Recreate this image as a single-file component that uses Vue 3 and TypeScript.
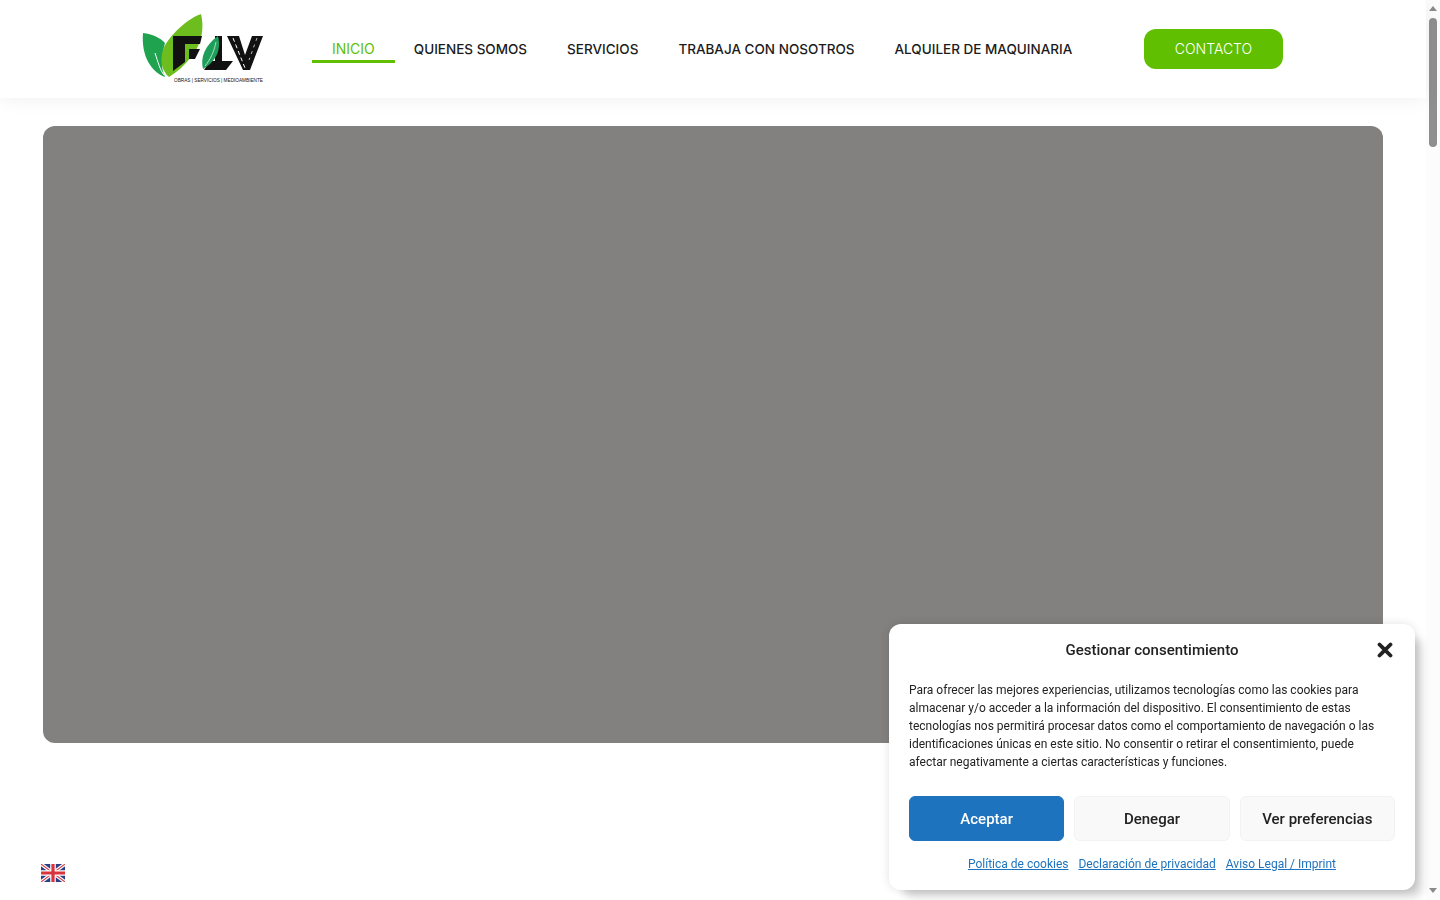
<script setup lang="ts">
const navItems: { label: string; active?: boolean }[] = [
  { label: 'INICIO', active: true },
  { label: 'QUIENES SOMOS' },
  { label: 'SERVICIOS' },
  { label: 'TRABAJA CON NOSOTROS' },
  { label: 'ALQUILER DE MAQUINARIA' },
]
const buttons = [
  { label: 'Aceptar', primary: true },
  { label: 'Denegar' },
  { label: 'Ver preferencias' },
]
const links = ['Política de cookies', 'Declaración de privacidad', 'Aviso Legal / Imprint']
</script>

<template>
  <div class="page">
    <div class="main">
      <header class="header">
        <svg class="logo" width="122" height="74" viewBox="0 0 122 74" aria-label="FLV">
          <path d="M1 21 C10 22 19 26 23 31 C20 42 18 55 23 65 C10 60 -1 45 1 21Z" fill="#1fa34f" />
          <path d="M13 41 C16 50 18 58 22 63" stroke="#fff" stroke-width="1" fill="none" />
          <path d="M59 2 C62 14 61 30 50 44 C42 54 35 60 27 65 C21 60 17 50 21 38 C24 28 42 8 59 2Z" fill="#6dbd1e" />
          <path d="M31 24 H60 L58 32 H43 V50 L31 59Z" fill="#111" />
          <path d="M47 37 H58 L53 47 H47Z" fill="#111" />
          <path d="M73 24 H80 V49 H91 L84 58 H62 L68 49 H73Z" fill="#111" />
          <path d="M76 24 C79 36 76 48 61 57 C58 46 63 33 76 24Z" fill="#1e9e5a" />
          <path d="M74 30 C72 40 68 48 63 54" stroke="#cfeeda" stroke-width="0.8" fill="none" />
          <path d="M85 24 H97 L103 43 L110 24 H121 L108 58 H101Z" fill="#111" />
          <path d="M91 26 L103 56" stroke="#fff" stroke-width="1" stroke-dasharray="4 3" fill="none" />
          <path d="M115 26 L107 48" stroke="#fff" stroke-width="0.7" stroke-dasharray="3 4" fill="none" />
          <text x="32" y="70" class="logo-sub" textLength="89" lengthAdjust="spacingAndGlyphs">OBRAS | SERVICIOS | MEDIOAMBIENTE</text>
        </svg>
        <nav class="nav">
          <a v-for="item in navItems" :key="item.label" class="nav-link" :class="{ active: item.active }">{{ item.label }}</a>
        </nav>
        <a class="contact">CONTACTO</a>
      </header>
      <div class="hero"></div>
    </div>
    <div class="scrollbar">
      <span class="arrow up"></span>
      <span class="thumb-track"><span class="thumb"></span></span>
      <span class="arrow down"></span>
    </div>

    <svg class="flag" width="24" height="18" viewBox="0 0 24 18" aria-label="English">
      <rect width="24" height="18" fill="#2b3f87" />
      <path d="M0 0 L24 18 M24 0 L0 18" stroke="#fff" stroke-width="3.4" />
      <path d="M0 0 L24 18 M24 0 L0 18" stroke="#d8434a" stroke-width="1.1" />
      <path d="M12 0 V18 M0 9 H24" stroke="#fff" stroke-width="5.6" />
      <path d="M12 0 V18 M0 9 H24" stroke="#d8343c" stroke-width="3.2" />
    </svg>

    <aside class="modal">
      <div class="modal-head">
        <h2 class="modal-title">Gestionar consentimiento</h2>
        <svg class="close" width="16" height="16" viewBox="0 0 16 16" aria-label="Cerrar">
          <path d="M2.5 2.5 L13.5 13.5 M13.5 2.5 L2.5 13.5" stroke="#222" stroke-width="3.8" stroke-linecap="round" />
        </svg>
      </div>
      <p class="modal-text">Para ofrecer las mejores experiencias, utilizamos tecnologías como las cookies para almacenar y/o acceder a la información del dispositivo. El consentimiento de estas tecnologías nos permitirá procesar datos como el comportamiento de navegación o las identificaciones únicas en este sitio. No consentir o retirar el consentimiento, puede afectar negativamente a ciertas características y funciones.</p>
      <div class="modal-buttons">
        <button v-for="b in buttons" :key="b.label" class="btn" :class="{ primary: b.primary }">{{ b.label }}</button>
      </div>
      <div class="modal-links">
        <a v-for="l in links" :key="l" class="modal-link">{{ l }}</a>
      </div>
    </aside>
  </div>
</template>

<style>
html, body { margin: 0; height: 100%; overflow: hidden; background: #fff; }
</style>

<style scoped>
.page { display: flex; width: 1440px; height: 900px; overflow: hidden; background: #fff; }
.main { width: 1426px; flex: none; }
.header {
  height: 98px;
  display: flex;
  align-items: center;
  padding-left: 142px;
  background: #fff;
  box-shadow: 0 2px 18px rgba(0, 0, 0, 0.06);
  position: relative;
}
.logo { flex: none; margin-right: 48px; overflow: visible; }
.logo-sub { font-family: "Liberation Sans Narrow", "Liberation Sans", sans-serif; font-size: 6px; fill: #111; }
.nav { display: flex; gap: 0; }
.nav-link {
  font-family: Inter, sans-serif;
  font-size: 13.5px;
  font-weight: 500;
  color: #1b1b1b;
  padding: 0 20px;
  height: 28px;
  line-height: 28px;
  box-sizing: border-box;
  white-space: nowrap;
}
.nav-link.active { color: #5fbf00; border-bottom: 3px solid #5fbf00; font-size: 14px; font-weight: 400; margin-right: -1px; }
.contact {
  margin-left: auto;
  margin-right: 143px;
  width: 139px;
  height: 40px;
  border-radius: 12px;
  background: #60bf00;
  color: #fff;
  font-family: Inter, sans-serif;
  font-size: 14px;
  font-weight: 300;
  line-height: 40px;
  text-align: center;
}
.hero {
  margin: 28px 0 0 43px;
  width: 1340px;
  height: 617px;
  border-radius: 12px;
  background: #83817f;
}
.scrollbar {
  width: 14px;
  flex: none;
  height: 900px;
  display: flex;
  flex-direction: column;
  align-items: center;
  background: #fcfcfc;
}
.arrow { width: 0; height: 0; border-left: 4.5px solid transparent; border-right: 4.5px solid transparent; flex: none; }
.arrow.up { border-bottom: 5px solid #8a8a8a; margin-top: 6px; }
.arrow.down { border-top: 5px solid #8a8a8a; margin-bottom: 7px; }
.thumb-track { flex: 1; width: 100%; display: flex; justify-content: center; padding-top: 7px; }
.thumb { width: 8px; height: 129px; border-radius: 4px; background: #8f8f8f; }
.flag { position: fixed; left: 41px; top: 864px; }
.modal {
  position: fixed;
  left: 889px;
  top: 624px;
  width: 526px;
  height: 266px;
  box-sizing: border-box;
  padding: 0 20px;
  background: #fff;
  border-radius: 12px;
  box-shadow: 10px 10px 10px -4px rgba(0, 0, 0, 0.2), 0 0 10px rgba(0, 0, 0, 0.12);
  font-family: Roboto, sans-serif;
  color: #222;
}
.modal-head { height: 52px; display: flex; align-items: center; justify-content: center; position: relative; }
.modal-title { margin: 0; font-size: 15px; font-weight: 500; }
.close { position: absolute; right: 2px; top: 18px; }
.modal-text { margin: 5px 0 0; max-width: 470px; font-size: 12px; line-height: 18px; color: #222; }
.modal-buttons { display: grid; grid-template-columns: repeat(3, 1fr); gap: 10px; margin-top: 25px; }
.btn {
  height: 45px;
  border-radius: 6px;
  border: 1px solid #f2f2f2;
  background: #f9f9f9;
  color: #222;
  font-family: Roboto, sans-serif;
  font-size: 15px;
  font-weight: 500;
  padding: 0;
}
.btn.primary { background: #1e73be; border-color: #1e73be; color: #fff; }
.modal-links { display: flex; justify-content: center; gap: 10px; margin-top: 14px; }
.modal-link { font-size: 12px; line-height: 18px; color: #1e73be; text-decoration: underline; }
</style>
